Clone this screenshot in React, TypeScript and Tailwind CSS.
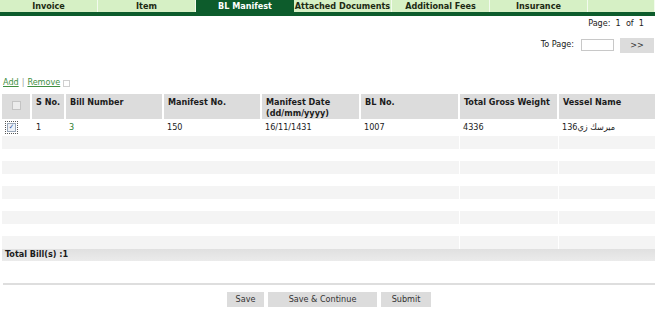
import React from "react";

const tabs = ["Invoice", "Item", "BL Manifest", "Attached Documents", "Additional Fees", "Insurance", ""];

const columns = [
  { label: "S No.", w: "w-[34px]" },
  { label: "Bill Number", w: "w-[98px]" },
  { label: "Manifest No.", w: "w-[98px]" },
  { label: "Manifest Date (dd/mm/yyyy)", w: "w-[99px]" },
  { label: "BL No.", w: "w-[99px]" },
  { label: "Total Gross Weight", w: "w-[99px]" },
  { label: "Vessel Name", w: "" },
];

const emptyRows = Array.from({ length: 9 });

export default function App() {
  return (
    <div className="w-[655px] h-[312px] bg-white text-[#1b1b1b] text-[9px] font-['DejaVu_Sans_Condensed','DejaVu_Sans',sans-serif] overflow-hidden">
      {/* tab strip */}
      <div className="flex h-[12px] bg-[#d6f0c5] border-b-[4px] border-[#0d5c2c] box-content">
        {tabs.map((t, i) => (
          <div
            key={i}
            className={
              "h-full flex items-center justify-center font-bold leading-none " +
              (i < 6 ? "w-[98px] " : "flex-1 ") +
              (i === 2
                ? "bg-[#0d5c2c] text-white"
                : "text-[#1c2a12] border-r border-white/70")
            }
          >
            {t}
          </div>
        ))}
      </div>

      {/* paging */}
      <div className="flex justify-end pr-[11px] mt-[2px] h-[12px] items-center">
        <span>Page:&nbsp; 1&nbsp; of&nbsp; 1</span>
      </div>
      <div className="flex justify-end items-center mt-[7px] h-[16px] pr-[1px]">
        <span className="mr-[7px]">To Page:</span>
        <div className="w-[33px] h-[12px] border border-[#c8c8c8] bg-white" />
        <button className="ml-[6px] w-[34px] h-[15px] bg-[#dcdcdc] text-[#333] leading-none">&gt;&gt;</button>
      </div>

      {/* add / remove */}
      <div className="flex items-center mt-[25px] ml-[3px] h-[10px] text-[#3f8f3f]">
        <span className="underline">Add</span>
        <span className="mx-[3px] text-[#999]">|</span>
        <span className="underline">Remove</span>
        <span className="ml-[3px] w-[7px] h-[7px] border border-[#cfcfcf]" />
      </div>

      {/* grid */}
      <table className="mt-[6px] ml-[2px] w-[653px] table-fixed border-collapse">
        <colgroup>
          <col className="w-[29px]" />
          {columns.map((c, i) => (
            <col key={i} className={c.w} />
          ))}
        </colgroup>
        <thead>
          <tr className="bg-[#dcdcdc] h-[25px]">
            <th className="align-top pt-[7px] border-r-2 border-white">
              <div className="mx-auto w-[9px] h-[9px] border border-[#c4c4c4] bg-[#ececec]" />
            </th>
            {columns.map((c, i) => (
              <th
                key={i}
                className="align-top text-left font-bold pl-[4px] pt-[3px] leading-[11px] border-r-2 border-white last:border-r-0"
              >
                {c.label === "Manifest Date (dd/mm/yyyy)" ? (
                  <>
                    Manifest Date
                    <br />
                    (dd/mm/yyyy)
                  </>
                ) : (
                  c.label
                )}
              </th>
            ))}
          </tr>
        </thead>
        <tbody>
          <tr className="h-[17px] bg-white">
            <td className="pl-[3px]">
              <div className="w-[13px] h-[13px] border border-dotted border-[#555] flex items-center justify-center">
                <div className="w-[9px] h-[9px] border border-[#9aa7b8] bg-[#eef2f8] flex items-center justify-center text-[7px] text-[#2b4c9a] leading-none">
                  ✓
                </div>
              </div>
            </td>
            <td className="pl-[5px]">1</td>
            <td className="pl-[4px] text-[#2f7d2f]">3</td>
            <td className="pl-[4px]">150</td>
            <td className="pl-[4px]">16/11/1431</td>
            <td className="pl-[4px]">1007</td>
            <td className="pl-[4px]">4336</td>
            <td className="pl-[4px]">ميرسك زي136</td>
          </tr>
          {emptyRows.map((_, i) => (
            <tr key={i} className={"h-[12.5px] " + (i % 2 === 0 ? "bg-[#f4f4f4]" : "bg-white")}>
              {Array.from({ length: 8 }).map((__, j) => (
                <td key={j} className={j === 5 || j === 6 ? "border-r border-white" : ""} />
              ))}
            </tr>
          ))}
          <tr className="h-[12px] bg-gradient-to-b from-[#e0e0e0] to-[#ebebeb]">
            <td colSpan={8} className="pl-[3px] font-bold leading-none">
              Total Bill(s) :1
            </td>
          </tr>
        </tbody>
      </table>

      {/* footer */}
      <div className="mt-[22px] ml-[3px] h-[2px] bg-[#dedede]" />
      <div className="flex justify-center gap-[4px] mt-[7px] pl-[3px]">
        <button className="w-[37px] h-[15px] bg-[#dcdcdc] text-[#333] leading-none">Save</button>
        <button className="w-[109px] h-[15px] bg-[#dcdcdc] text-[#333] leading-none">Save &amp; Continue</button>
        <button className="w-[50px] h-[15px] bg-[#dcdcdc] text-[#333] leading-none">Submit</button>
      </div>
    </div>
  );
}
